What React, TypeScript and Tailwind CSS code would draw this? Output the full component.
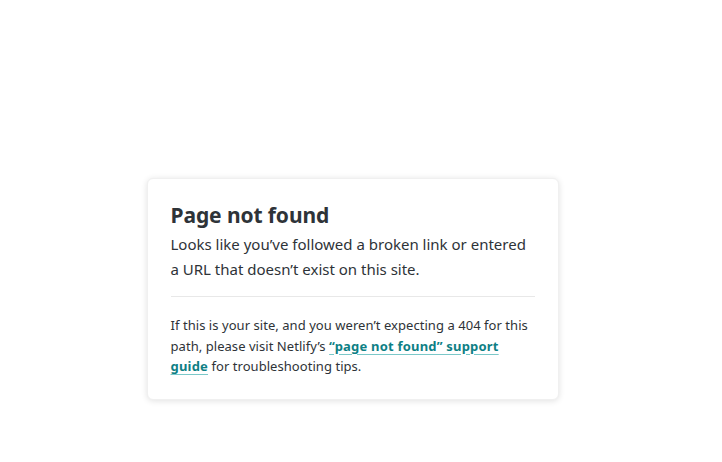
function App() {
  return (
    <div className="min-h-screen w-[705px] bg-white pt-[178px]" style={{ fontFamily: '"Noto Sans", "Open Sans", sans-serif' }}>
      <div className="mx-auto w-[412px] rounded-md bg-white px-[23px] pt-[20px] pb-[22px] text-[#2e3338] shadow-[0_1px_6px_rgba(0,0,0,0.12)] border border-[#f0f0f0]">
        <h1 className="text-[21px] font-bold leading-8 tracking-[-0.1px]">Page not found</h1>
        <p className="text-[15px] leading-[25px] mt-px">
          Looks like you’ve followed a broken link or entered a URL that doesn’t exist on this site.
        </p>
        <hr className="my-[14px] border-t border-[#e8e8e8]" />
        <p className="text-[13px] leading-[20.5px] pt-[4px] tracking-[0.05px]">
          If this is your site, and you weren’t expecting a 404 for this path, please visit Netlify’s{" "}
          <a href="#" className="font-bold text-[#0e7f85] underline decoration-[#7bc8c9] underline-offset-[3px] tracking-[0.2px]">
            “page not found” support guide
          </a>{" "}
          for troubleshooting tips.
        </p>
      </div>
    </div>
  );
}

export default App;
